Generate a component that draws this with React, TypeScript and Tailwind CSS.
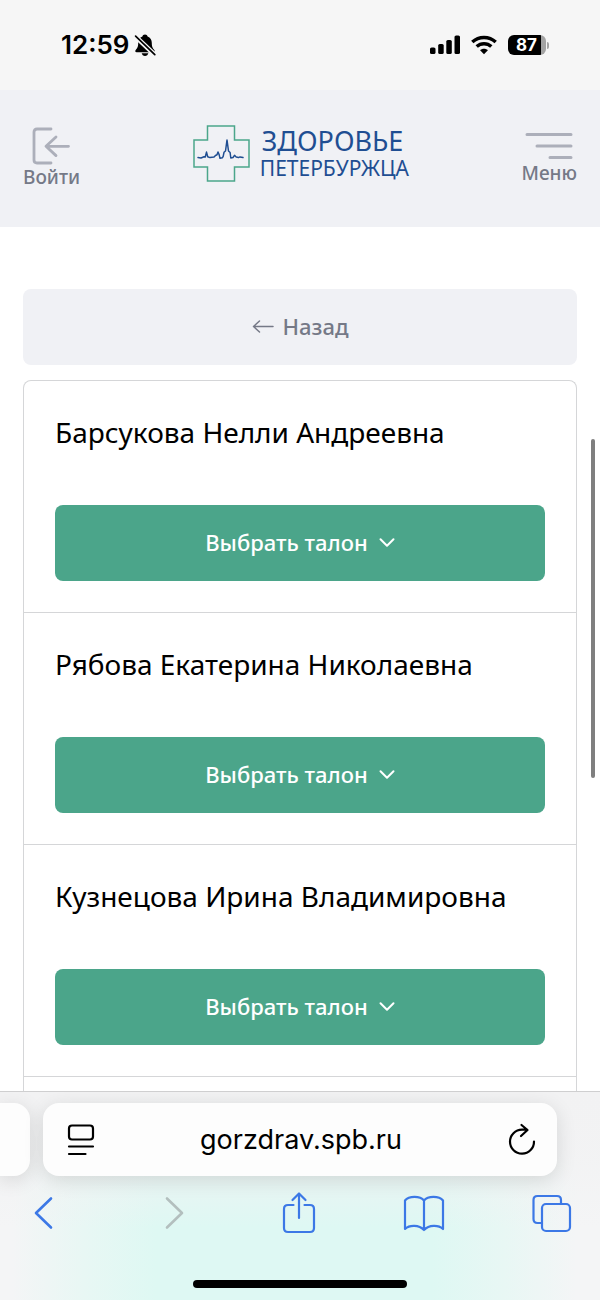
import type { ReactNode } from 'react';

const doctors = [
  'Барсукова Нелли Андреевна',
  'Рябова Екатерина Николаевна',
  'Кузнецова Ирина Владимировна',
];

function StatusBar() {
  return (
    <div className="flex h-[90px] shrink-0 items-center justify-between bg-[#f6f6f6] pr-[51px] pl-[61px] font-['Inter','Liberation_Sans',sans-serif] text-black">
      <div className="flex items-center gap-1">
        <span className="text-[26px] leading-8 font-semibold">12:59</span>
        <svg width="24" height="24" viewBox="0 0 24 24" role="img" aria-label="Без звука">
          <path
            d="M12 1.500c-1.400 0-2.400.9-2.600 2.100C6.600 4.600 5.200 6.900 5.200 9.800c0 4.200-1 5.500-2.500 7.100-.8.900-.5 2.300.9 2.300h16.800c1.400 0 1.700-1.400.9-2.300-1.500-1.600-2.500-2.900-2.500-7.100 0-2.900-1.400-5.200-4.200-6.200C14.400 2.400 13.400 1.500 12 1.500z"
          />
          <path d="M8.700 20.300h6.600c-.3 1.600-1.600 2.600-3.300 2.600s-3-1-3.300-2.600z" />
          <path d="M2.500 3.500l19.500 18.500" stroke="#f6f6f6" strokeWidth="4.500" />
          <path d="M2.600 3.200l19.200 18.400" stroke="black" strokeWidth="1.700" strokeLinecap="round" />
        </svg>
      </div>
      <div className="flex items-center gap-[11px]">
        <svg width="30" height="20" viewBox="0 0 30 20" role="img" aria-label="Сеть">
          <rect x="0" y="12.500" width="5.500" height="6.500" rx="1.600" />
          <rect x="8.200" y="9" width="5.500" height="10" rx="1.600" />
          <rect x="16.300" y="5" width="5.500" height="14" rx="1.600" />
          <rect x="24.500" y="0.500" width="5.500" height="18.500" rx="1.600" />
        </svg>
        <svg width="26" height="20" viewBox="0 0 26 20" fill="none" stroke="black" strokeWidth="3.400" role="img" aria-label="Wi-Fi">
          <path d="M1.300 7.100a17 17 0 0 1 23.400 0" />
          <path d="M5.700 11.600a10.600 10.600 0 0 1 14.600 0" />
          <path d="M13 19.300l-3.900-4c2.200-2 5.600-2 7.800 0z" fill="black" stroke="none" />
        </svg>
        <div className="flex items-center gap-px">
          <span className="flex h-5 w-[38px] items-center justify-center rounded-md bg-linear-to-r from-black from-87% to-[#a3a3a3] to-87% pr-px text-[17px] leading-5 font-bold text-white">
            87
          </span>
          <span className="h-[7px] w-[2px] rounded-r-full bg-[#a3a3a3]" />
        </div>
      </div>
    </div>
  );
}

function Logo() {
  return (
    <a href="#" className="flex items-center gap-[10px] text-[#1f4e92]">
      <svg width="57" height="57" viewBox="0 0 57 57" fill="none" aria-hidden="true">
        <path d="M14.500 1h27v14H56v27H41.500v14h-27V42H1V15h13.500z" stroke="#4ba68b" strokeWidth="1.500" />
        <path
          d="M5 32.500l3 .5 3-1.200 1.200.3 1.300-5 1.200 4.700 2.300.8 4-.5 1.500-1.600 1.500-.7 1-2.800 1.200 2.800.8 3.500 2.300-.5.900-1.500.8-4 1.500-1.300 1.500-11 1.500 11 1.600 1.500.7 5.500 2.200-.5 1.500-2.200 1.700 1.700 2.300.6 1.500-.7 3 .7"
          stroke="#1f4e92"
          strokeWidth="1.500"
          strokeLinejoin="round"
          strokeLinecap="round"
        />
      </svg>
      <span className="flex flex-col">
        <span className="pl-[2px] text-[27px] leading-7">ЗДОРОВЬЕ</span>
        <span className="text-[21px] leading-[26px]">ПЕТЕРБУРЖЦА</span>
      </span>
    </a>
  );
}

function Header() {
  return (
    <header className="flex h-[137px] shrink-0 items-start justify-between bg-[#f0f1f5] px-[23px] pt-[35px]">
      <button type="button" className="flex flex-col items-center text-[19px] leading-6 font-medium text-[#757987]">
        <svg width="40" height="40" viewBox="0 0 40 40" fill="none" stroke="#acafba" strokeWidth="2.800" strokeLinecap="round" strokeLinejoin="round" aria-hidden="true">
          <path d="M19 4H5q-3 0-3 3v28q0 3 3 3h14M36.500 21.300H14M24 12 14 21.300l10 9.300" />
        </svg>
        <span>Войти</span>
      </button>
      <Logo />
      <button type="button" className="flex flex-col items-center text-[19px] leading-6 font-medium text-[#757987]">
        <svg width="48" height="36" viewBox="0 0 48 36" stroke="#acafba" strokeWidth="3" strokeLinecap="round" aria-hidden="true">
          <path d="M2 9.500h44M12 21h34M25 32.500h21" />
        </svg>
        <span>Меню</span>
      </button>
    </header>
  );
}

function DoctorCard({ name }: { name: string }) {
  return (
    <li className="border-b border-[#d5d6d8] px-[31px] pt-8 pb-[31px]">
      <h2 className="text-[28px] leading-[38px] text-black">{name}</h2>
      <button
        type="button"
        className="mt-[54px] flex h-[76px] w-full items-center justify-center gap-[11px] rounded-lg bg-[#4ba58a] pb-0.5 text-[22px] leading-7 font-medium text-white"
      >
        Выбрать талон
        <svg width="16" height="12" viewBox="0 0 16 12" fill="none" stroke="currentColor" strokeWidth="2" strokeLinecap="round" strokeLinejoin="round" aria-hidden="true">
          <path d="M1.500 3.300 8 9.800l6.500-6.500" />
        </svg>
      </button>
    </li>
  );
}

function ToolButton({ label, disabled, children }: { label: string; disabled?: boolean; children: ReactNode }) {
  return (
    <button type="button" aria-label={label} disabled={disabled} className="text-[#3c78e6] disabled:text-[#b3bfbe]">
      <svg width="48" height="44" viewBox="0 0 48 44" fill="none" stroke="currentColor" strokeWidth="2.200" strokeLinecap="round" strokeLinejoin="round" aria-hidden="true">
        {children}
      </svg>
    </button>
  );
}

function BrowserBar() {
  return (
    <footer className="flex h-[209px] shrink-0 flex-col overflow-hidden border-t border-[#cfcfd0] bg-[linear-gradient(to_bottom,#f2f2f3_0%,#f2f2f3cc_30%,#f2f2f300_65%),linear-gradient(to_right,#f4f5f6_2%,#e8f7f4_14%,#def8f3_26%,#def8f3_72%,#e8f7f4_84%,#f4f5f6_96%)] font-['Inter','Liberation_Sans',sans-serif]">
      <div className="mt-[11px] flex h-[73px] shrink-0 gap-[13px] pr-[43px]">
        <div className="w-[30px] rounded-r-2xl bg-[#fdfdfd] shadow-[0_4px_20px_rgba(0,0,0,0.12)]" />
        <div className="flex flex-1 items-center justify-between rounded-2xl bg-[#fdfdfd] pr-[20px] pl-[24px] text-black shadow-[0_4px_20px_rgba(0,0,0,0.12)]">
          <button type="button" aria-label="Параметры страницы">
            <svg width="28" height="32" viewBox="0 0 28 32" fill="none" stroke="currentColor" strokeWidth="2.200" strokeLinecap="round" aria-hidden="true">
              <rect x="2" y="1.500" width="24" height="14" rx="3" />
              <path d="M2 22.500h24M2 30h16.500" />
            </svg>
          </button>
          <span className="text-[27px] leading-9">gorzdrav.spb.ru</span>
          <button type="button" aria-label="Обновить">
            <svg width="30" height="34" viewBox="0 0 30 34" fill="none" stroke="currentColor" strokeWidth="2.200" strokeLinecap="round" strokeLinejoin="round" aria-hidden="true">
              <path d="M27 18.500A12 12 0 1 1 15 6.700h5M14.500 2l6 5-6.500 6" />
            </svg>
          </button>
        </div>
      </div>
      <nav aria-label="Браузер" className="mt-[15px] flex shrink-0 justify-between pr-[25px] pl-[19px]">
        <ToolButton label="Назад">
          <path d="M32 7.500 17 22l15 14.500" strokeWidth="2.600" />
        </ToolButton>
        <ToolButton label="Вперёд" disabled>
          <path d="M21 7.500 36 22 21 36.500" strokeWidth="2.600" />
        </ToolButton>
        <ToolButton label="Поделиться">
          <path d="M20.500 14H15q-4 0-4 4v19q0 4 4 4h22q4 0 4-4V18q0-4-4-4h-5.500M26 27V2.500M19.500 9 26 2.500 32.500 9" />
        </ToolButton>
        <ToolButton label="Закладки">
          <path d="M24 9.500C20 4.600 9 4.600 5 9.500V38c4.500-4.300 14-4.300 19 1 5-5.300 14.500-5.300 19-1V9.500C39 4.600 28 4.600 24 9.500V39" />
        </ToolButton>
        <ToolButton label="Вкладки">
          <rect x="15" y="13" width="28" height="27" rx="4" />
          <path d="M15 32h-4.500Q6.500 32 6.500 28V9q0-4 4-4H30q4 0 4 4v4" />
        </ToolButton>
      </nav>
      <div className="mt-[45px] h-[8px] w-[214px] shrink-0 self-center rounded-full bg-black" />
    </footer>
  );
}

export default function App() {
  return (
    <div className="relative flex h-screen flex-col overflow-hidden bg-white font-['Noto_Sans',sans-serif]">
      <StatusBar />
      <Header />
      <main className="min-h-0 flex-1 overflow-hidden px-[23px] pt-[62px]">
        <button
          type="button"
          className="flex h-[76px] w-full items-center justify-center gap-[9px] rounded-lg bg-[#f0f1f5] pb-0.5 text-[22px] leading-7 font-medium text-[#757987]"
        >
          <svg width="22" height="16" viewBox="0 0 22 16" fill="none" stroke="currentColor" strokeWidth="1.500" strokeLinecap="round" strokeLinejoin="round" aria-hidden="true">
            <path d="M21 8.500H1.500M7.500 3l-6 5.500 6 5.500" />
          </svg>
          Назад
        </button>
        <ul className="mt-[15px] rounded-t-lg border border-b-0 border-[#d5d6d8]">
          {doctors.map((name) => (
            <DoctorCard key={name} name={name} />
          ))}
          <li className="h-[232px]" />
        </ul>
      </main>
      <BrowserBar />
      <div className="absolute top-[439px] right-[5px] h-[339px] w-[4px] rounded-full bg-[#7f7f7f]" />
    </div>
  );
}
